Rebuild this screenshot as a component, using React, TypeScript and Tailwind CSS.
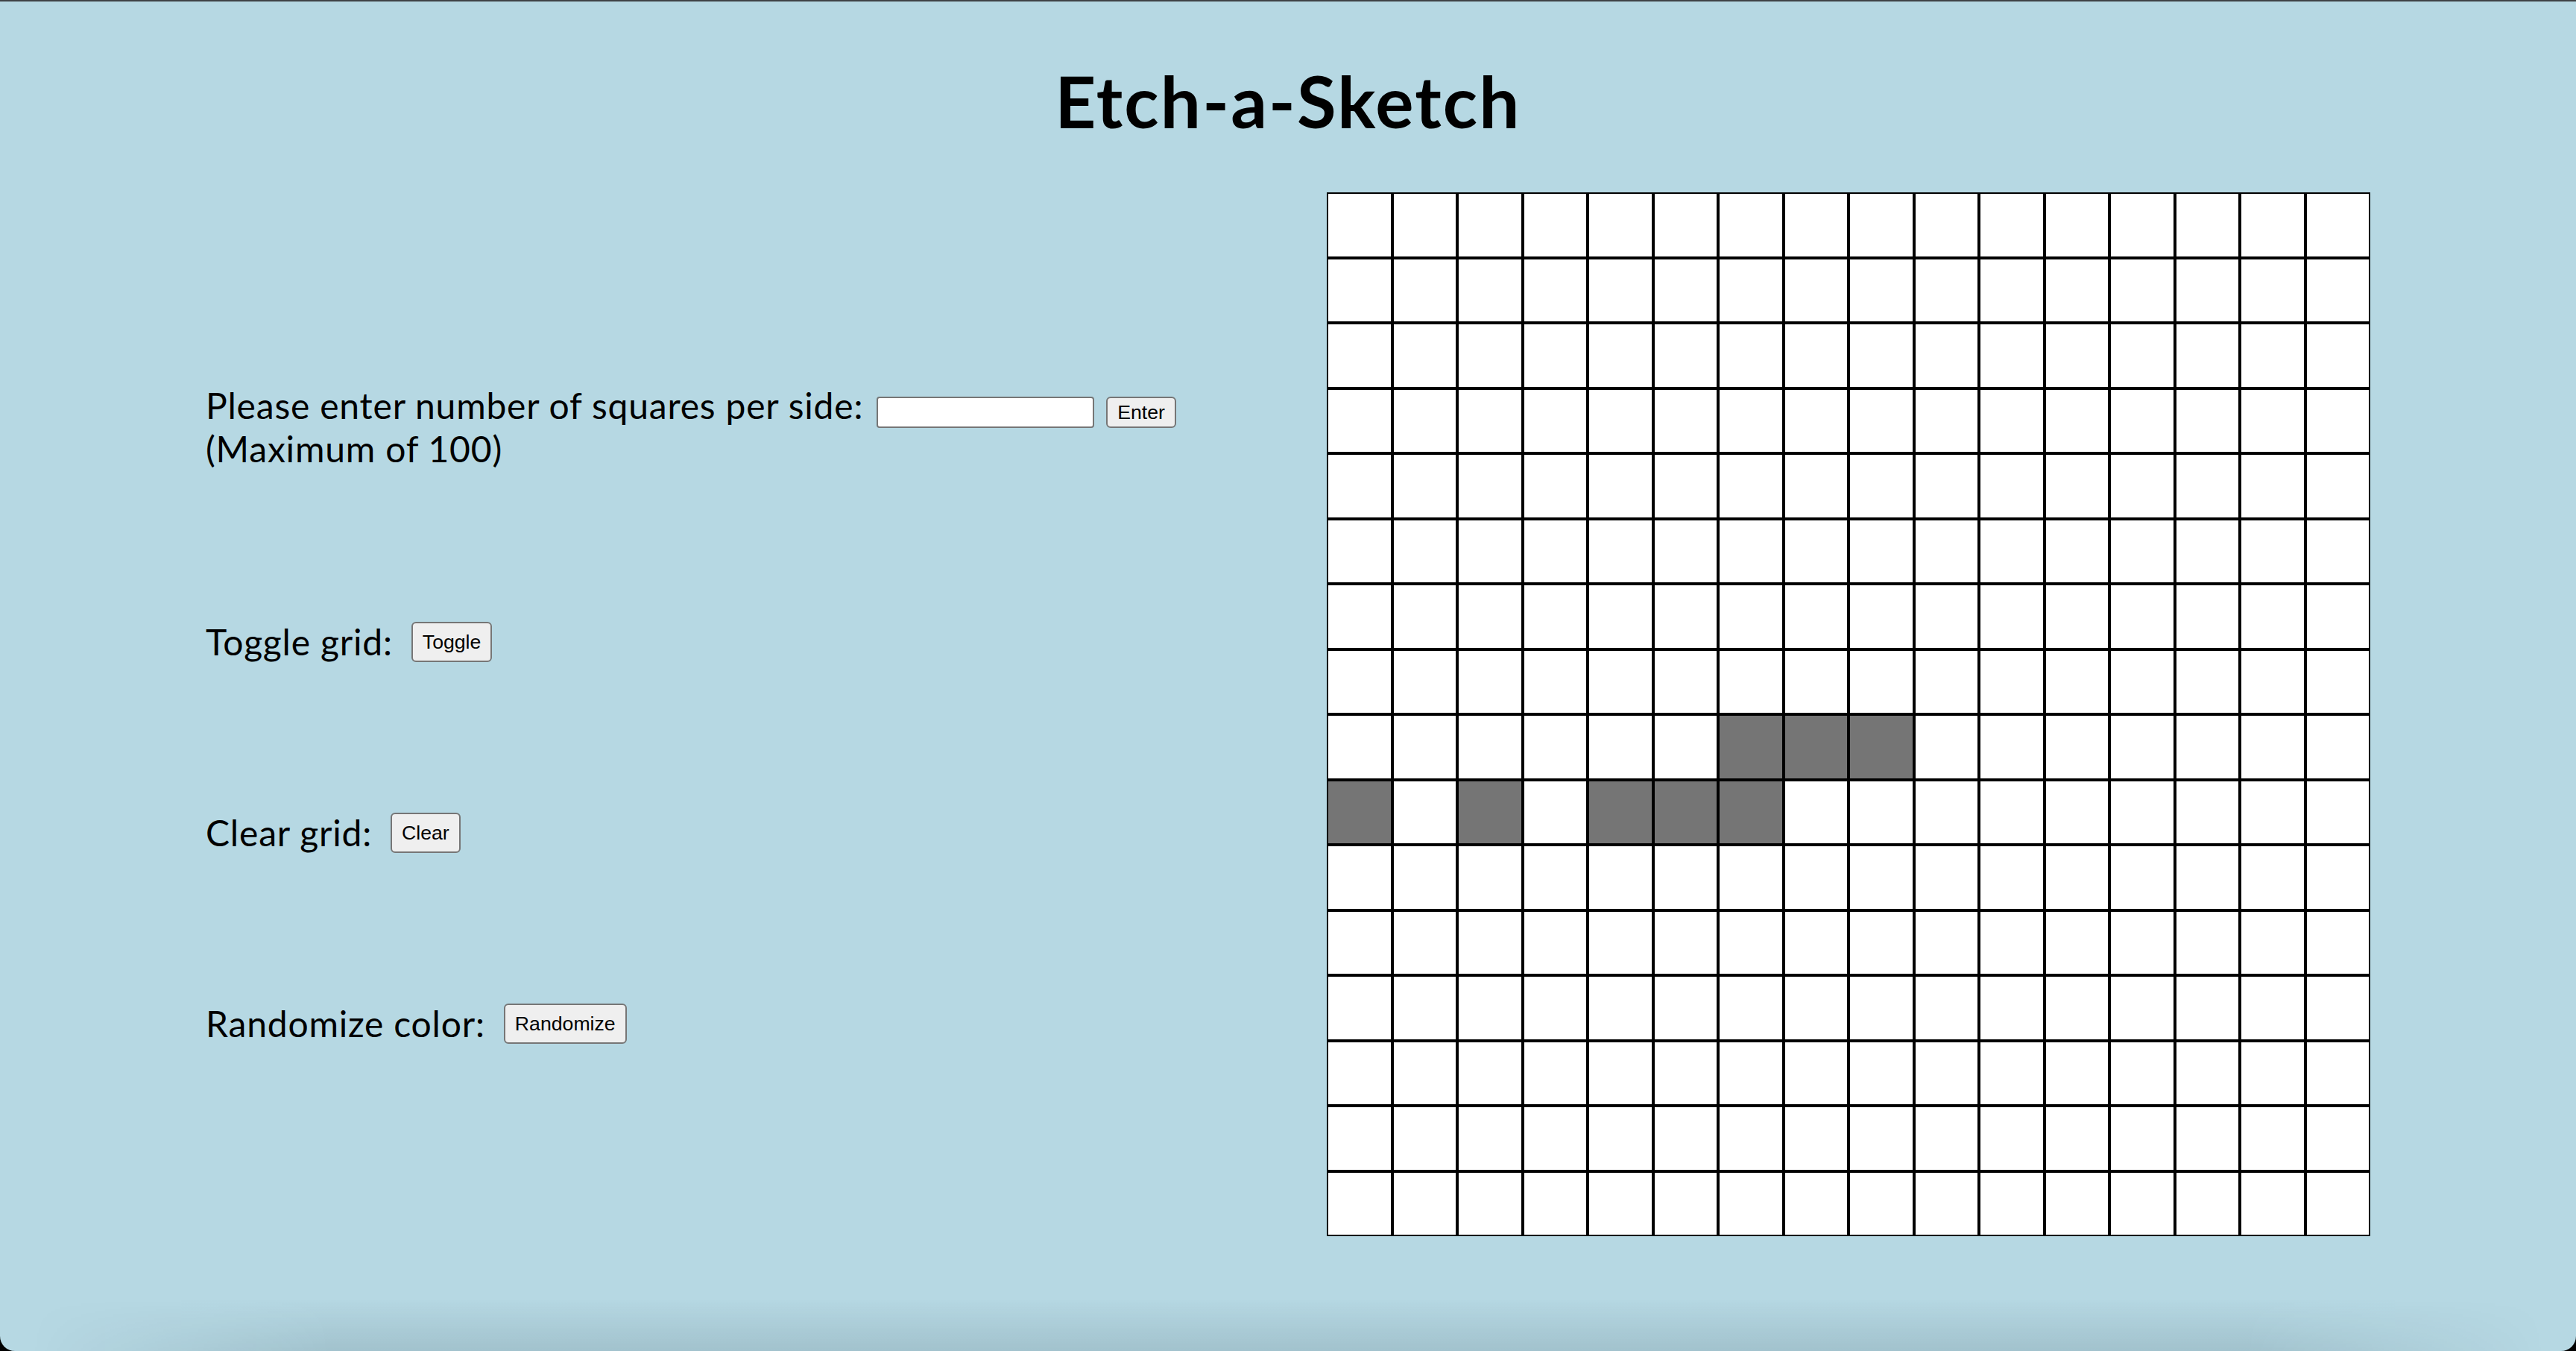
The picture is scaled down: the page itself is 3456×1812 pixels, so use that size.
import React from "react";

const N = 16;
const dark = new Set<string>(["8-6", "8-7", "8-8", "9-0", "9-2", "9-4", "9-5", "9-6"]);

function Btn({ children, h }: { children: React.ReactNode; h: string }) {
  return (
    <button
      className={
        "border-2 border-[#767676] bg-[#efefef] rounded-[6px] px-[13px] text-[26.67px] leading-none tracking-normal text-black " + h
      }
      style={{ fontFamily: '"Liberation Sans", Arial, sans-serif' }}
    >
      {children}
    </button>
  );
}

export default function App() {
  const cells: React.ReactNode[] = [];
  for (let r = 0; r < N; r++) {
    for (let c = 0; c < N; c++) {
      const d = dark.has(`${r}-${c}`);
      cells.push(
        <div key={`${r}-${c}`} className={"border-2 border-black " + (d ? "bg-[#757575]" : "bg-white")} />
      );
    }
  }
  return (
    <div className="w-[3456px] h-[1812px] bg-black overflow-hidden">
      <div
        className="relative w-full h-full bg-[#b6d8e3] border-t-2 border-t-[#3e4245] rounded-b-[20px] overflow-hidden text-black"
        style={{ fontFamily: 'Lato, "Noto Sans", sans-serif' }}
      >
        <h1 className="mt-[75px] text-center text-[96px] font-bold leading-[115px] tracking-[2.2px]">Etch-a-Sketch</h1>
        <div className="flex mt-[66px]">
          <div className="w-[1780px] pl-[276px] pt-[258px] flex flex-col text-[48px] leading-[56px] tracking-[0.8px]">
            <div>
              <div className="flex items-start">
                <span>Please enter number of squares per side:</span>
                <input
                  type="text"
                  className="ml-[18px] mt-[16px] w-[292px] h-[42px] border-2 border-[#767676] rounded-[4px] bg-white"
                />
                <div className="ml-[16px] mt-[16px] flex">
                  <Btn h="h-[42px]">Enter</Btn>
                </div>
              </div>
              <div>(Maximum of 100)</div>
            </div>
            <div className="mt-[203px] h-[56px] flex items-center gap-[25px]">
              <span>Toggle grid:</span>
              <Btn h="h-[54px]">Toggle</Btn>
            </div>
            <div className="mt-[200px] h-[56px] flex items-center gap-[25px]">
              <span>Clear grid:</span>
              <Btn h="h-[54px]">Clear</Btn>
            </div>
            <div className="mt-[200px] h-[56px] flex items-center gap-[25px]">
              <span>Randomize color:</span>
              <Btn h="h-[54px]">Randomize</Btn>
            </div>
          </div>
          <div className="w-[1400px] h-[1400px] grid grid-cols-16 grid-rows-16">{cells}</div>
        </div>
        <div className="absolute bottom-0 left-[40px] right-[40px] h-[70px] bg-[linear-gradient(to_top,rgba(0,20,30,0.11),rgba(0,20,30,0))] [mask-image:linear-gradient(to_right,transparent,black_12%,black_88%,transparent)]" />
      </div>
    </div>
  );
}
